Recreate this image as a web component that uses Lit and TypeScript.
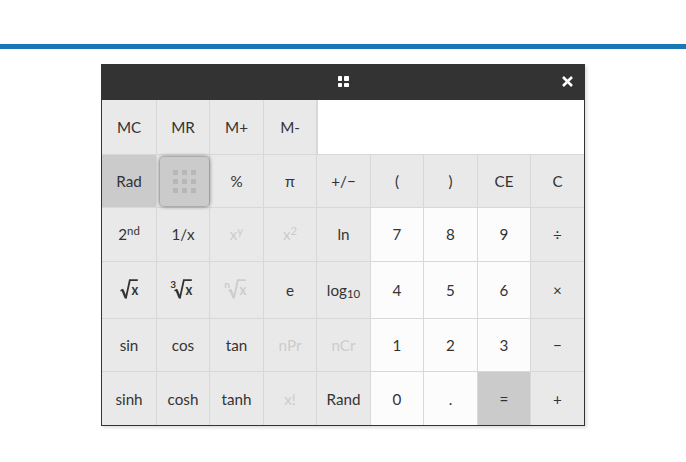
import { LitElement, html, css, svg, nothing } from "lit";
import { customElement, property } from "lit/decorators.js";
import { classMap } from "lit/directives/class-map.js";

type Kind = "fn" | "num" | "dark";
interface Key { label: unknown; kind?: Kind; off?: boolean; handle?: boolean }

@customElement("root-icon")
class RootIcon extends LitElement {
  @property() index = "";
  static styles = css`
    :host { display: block; width: 30px; height: 24px; }
    svg { display: block; overflow: visible; }
    .stroke { fill: none; stroke: currentColor; }
    .x { font: bold 15.5px Lato, sans-serif; fill: currentColor; }
    .index { font: bold 10px Lato, sans-serif; fill: currentColor; }
  `;
  render() {
    return html`<svg width="30" height="24" viewBox="0 0 30 24">
      <path class="stroke" stroke-width="1.5" d="M6.5 12.8 L9 11.5" />
      <path class="stroke" stroke-width="2.4" d="M8.4 11.6 L11.7 19.8" />
      <path class="stroke" stroke-width="1.8" d="M11.8 20.6 L15.8 2.2 H23.8" />
      <text class="x" transform="translate(17.6 17) scale(.84 1)">x</text>
      ${this.index ? svg`<text class="index" x="2.2" y="9.8">${this.index}</text>` : nothing}
    </svg>`;
  }
}

@customElement("app-root")
class AppRoot extends LitElement {
  static styles = css`
    :host { display: block; height: 462px; background: #fff; overflow: hidden;
      font-family: Lato, sans-serif; font-size: 15.2px; color: #333; }
    .rule { height: 5px; margin-top: 44px; background: #1a77b5; }
    .space { display: flow-root; }
    .panel { box-sizing: border-box; width: 484px; height: 362px; margin: 15px 0 0 101px;
      border: 1px solid #333; box-shadow: 2px 2px 3px rgba(0, 0, 0, 0.13); background: #fff; }
    .bar { display: grid; grid-template-columns: 1fr auto 1fr; align-items: center; box-sizing: border-box;
      height: 35px; padding-bottom: 2px; background: #333; color: #fff; }
    .grip { grid-column: 2; display: block; }
    .close { justify-self: end; margin-right: 10px; display: block; }
    .keys { display: grid;
      grid-template-columns: 55px 53px 54px 53px 54px 53px 54px 53px 53px;
      grid-template-rows: 55px 53px 54px 57px 53px 53px; }
    .key { box-sizing: border-box; display: flex; align-items: center; justify-content: center;
      border-right: 1px solid #d8d8d8; border-bottom: 1px solid #d8d8d8;
      background: #e9e9e9; line-height: 20px; white-space: nowrap; }
    .key.num { background: #fcfcfc; }
    .key.dark { background: #cbcbcb; }
    .key.off { color: #ccc; }
    .key.raised { padding-bottom: 1px; }
    .key.last { border-right: 0; }
    .key.bottom { border-bottom: 0; }
    .display { grid-column: span 5; box-sizing: border-box; background: #fff;
      border-left: 1px solid #d8d8d8; border-bottom: 1px solid #d8d8d8; }
    .lift { position: relative; z-index: 1; flex: none; box-sizing: border-box; width: 49px; height: 49px;
      margin: 1px 0 0 3px; border-radius: 4px;
      background: #cbcbcb; box-shadow: 0 0 4px rgba(0, 0, 0, 0.65);
      display: grid; grid-template-columns: repeat(3, 5px); gap: 4px; place-content: center; }
    .dot { width: 5px; height: 5px; background: #b7b7b7; }
    .pi { font-family: "Liberation Sans", sans-serif; font-size: 15px; margin-top: 1px; }
    sup, sub { font-size: 11.4px; line-height: 0; position: relative; vertical-align: baseline; }
    sup { top: -5px; }
    sub { top: 2px; }
  `;

  private rows: Key[][] = [
    [{ label: "MC" }, { label: "MR" }, { label: "M+" }, { label: "M-" }],
    [{ label: "Rad", kind: "dark" }, { label: "", handle: true }, { label: "%" },
      { label: html`<span class="pi">π</span>` },
      { label: "+/−" }, { label: "(" }, { label: ")" }, { label: "CE" }, { label: "C" }],
    [{ label: html`<span>2<sup>nd</sup></span>` }, { label: "1/x" },
      { label: html`<span>x<sup>y</sup></span>`, off: true },
      { label: html`<span>x<sup>2</sup></span>`, off: true }, { label: "ln" },
      { label: "7", kind: "num" }, { label: "8", kind: "num" }, { label: "9", kind: "num" }, { label: "÷" }],
    [{ label: html`<root-icon></root-icon>` }, { label: html`<root-icon index="3"></root-icon>` },
      { label: html`<root-icon index="n"></root-icon>`, off: true }, { label: "e" },
      { label: html`<span>log<sub>10</sub></span>` },
      { label: "4", kind: "num" }, { label: "5", kind: "num" }, { label: "6", kind: "num" }, { label: "×" }],
    [{ label: "sin" }, { label: "cos" }, { label: "tan" }, { label: "nPr", off: true }, { label: "nCr", off: true },
      { label: "1", kind: "num" }, { label: "2", kind: "num" }, { label: "3", kind: "num" }, { label: "−" }],
    [{ label: "sinh" }, { label: "cosh" }, { label: "tanh" }, { label: "x!", off: true }, { label: "Rand" },
      { label: "0", kind: "num" }, { label: ".", kind: "num" }, { label: "=", kind: "dark" }, { label: "+" }],
  ];

  private key(k: Key, row: number, col: number) {
    const cls = { key: true, num: k.kind === "num", dark: k.kind === "dark", off: !!k.off,
      raised: row === 2, last: col === 8, bottom: row === 5 };
    return html`<div class=${classMap(cls)}>${k.handle
      ? html`<div class="lift">${Array.from({ length: 9 }, () => html`<i class="dot"></i>`)}</div>`
      : k.label}</div>`;
  }

  render() {
    return html`<div class="space"><div class="rule"></div>
      <div class="panel">
        <div class="bar">
          <svg class="grip" width="11" height="11" viewBox="0 0 11 11" fill="currentColor">
            <rect width="4" height="5" rx=".7" /><rect x="6" width="5" height="5" rx=".7" />
            <rect y="7" width="4" height="4" rx=".7" /><rect x="6" y="7" width="5" height="4" rx=".7" />
          </svg>
          <svg class="close" width="13" height="13" viewBox="0 0 13 13" fill="none" stroke="currentColor" stroke-width="2.6">
            <path d="M2 2 L11 11 M11 2 L2 11" />
          </svg>
        </div>
        <div class="keys">
          ${this.rows.map((row, r) => html`${row.map((k, c) => this.key(k, r, c))}${r === 0
            ? html`<div class="display"></div>` : nothing}`)}
        </div>
      </div></div>`;
  }
}
